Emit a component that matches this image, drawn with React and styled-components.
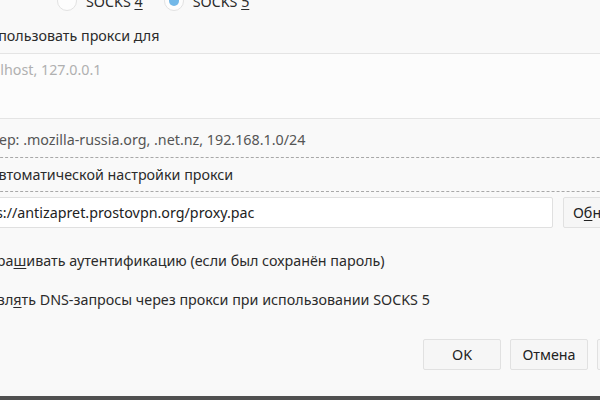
import React from "react";
import styled, { createGlobalStyle } from "styled-components";

const GlobalStyle = createGlobalStyle`
  html, body {
    margin: 0;
    padding: 0;
    background: #f9f9f9;
    overflow: hidden;
  }
  body {
    font-family: "Noto Sans", "Open Sans", sans-serif;
    font-size: 14.3px;
    color: #2b2b2b;
  }
`;

const Page = styled.div`
  width: 600px;
  height: 400px;
  overflow: hidden;
  display: flex;
  flex-direction: column;
  background: #f9f9f9;
`;

const Content = styled.div`
  flex: 1;
  display: flex;
  flex-direction: column;
  margin-left: -40px;
  margin-top: -12px;
`;

const Row = styled.div`
  display: flex;
  align-items: center;
  gap: ${(p) => p.gap || 8}px;
  margin-left: ${(p) => p.shift || 0}px;
  margin-top: ${(p) => p.top || 0}px;
  height: ${(p) => p.h || 20}px;
  white-space: nowrap;
`;

const Radio = styled.span`
  width: 20px;
  height: 20px;
  box-sizing: border-box;
  border-radius: 50%;
  border: 1px solid #e2e2e2;
  background: #fdfdfd;
  display: flex;
  align-items: center;
  justify-content: center;
  flex-shrink: 0;

  &::after {
    content: "";
    width: 10px;
    height: 10px;
    border-radius: 50%;
    background: ${(p) => (p.checked ? "#72b8e8" : "transparent")};
  }
`;

const RadioLabel = styled.span`
  margin-right: 12px;
`;

const Key = styled.u`
  text-decoration-thickness: 1px;
  text-underline-offset: 2px;
`;

const Label = styled.div`
  white-space: nowrap;
`;

const NoProxyArea = styled.textarea`
  display: block;
  margin-top: 7px;
  width: 700px;
  height: 66px;
  box-sizing: border-box;
  border: 0;
  border-top: 1px solid #e4e4e4;
  border-bottom: 1px solid #e4e4e4;
  background: #fcfcfc;
  padding: 6px 8px 6px 13px;
  resize: none;
  font-family: inherit;
  font-size: 14.3px;
  color: #2b2b2b;
  outline: none;

  &::placeholder {
    color: #b0b0b0;
  }
`;

const Hint = styled.div`
  margin-top: 10px;
  height: 20px;
  display: flex;
  align-items: center;
  color: #555;
  white-space: nowrap;
`;

const FocusRow = styled.div`
  margin-top: 8px;
  height: 35px;
  box-sizing: border-box;
  border-top: 1px dashed #a8a8a8;
  border-bottom: 1px dashed #a8a8a8;
  width: 760px;
  display: flex;
  align-items: center;
  white-space: nowrap;
`;

const UrlRow = styled.div`
  display: flex;
  align-items: center;
  gap: 10px;
  margin-top: 5px;
  margin-left: ${(p) => p.shift}px;
`;

const UrlInput = styled.input`
  width: ${(p) => p.w}px;
  height: 31px;
  box-sizing: border-box;
  flex-shrink: 0;
  border: 1px solid #e0e0e0;
  border-radius: 2px;
  background: #fff;
  padding: 0 6px;
  font-family: inherit;
  font-size: 14.3px;
  color: #222;
  outline: none;
`;

const Button = styled.button`
  width: ${(p) => p.w || 78}px;
  height: 31px;
  box-sizing: border-box;
  border: 1px solid #e1e1e1;
  border-radius: 2px;
  background: #f6f6f6;
  font-family: inherit;
  font-size: 14.3px;
  color: #222;
  padding: 0;
  flex-shrink: 0;
`;

const Footer = styled.div`
  display: flex;
  gap: 9px;
  padding-left: 423px;
  padding-bottom: 26px;
`;

const BottomBar = styled.div`
  height: 4px;
  background: #505050;
`;

export default function App() {
  return (
    <>
      <GlobalStyle />
      <Page>
        <Content>
          <Row shift={97} gap={9} h={26}>
            <Radio />
            <RadioLabel>
              SOCKS <Key>4</Key>
            </RadioLabel>
            <Radio checked />
            <RadioLabel>
              SOCKS <Key>5</Key>
            </RadioLabel>
          </Row>
          <Row top={10} h={22}>
            <Label>Не использовать прокси для</Label>
          </Row>
          <NoProxyArea readOnly placeholder="localhost, 127.0.0.1" />
          <Hint>Пример: .mozilla-russia.org, .net.nz, 192.168.1.0/24</Hint>
          <FocusRow>
            <Label>URL автоматической настройки прокси</Label>
          </FocusRow>
          <UrlRow shift={1}>
            <UrlInput
              w={592}
              readOnly
              value="https://antizapret.prostovpn.org/proxy.pac"
            />
            <Button w={88}>
              О<Key>б</Key>новить
            </Button>
          </UrlRow>
          <Row top={21} h={22} shift={12}>
            <Label>
              Запра<Key>ш</Key>ивать аутентификацию (если был сохранён пароль)
            </Label>
          </Row>
          <Row top={17} h={22} shift={-6}>
            <Label>
              Отправл<Key>я</Key>ть DNS-запросы через прокси при использовании
              SOCKS 5
            </Label>
          </Row>
        </Content>
        <Footer>
          <Button>OK</Button>
          <Button>Отмена</Button>
          <Button>Справка</Button>
        </Footer>
        <BottomBar />
      </Page>
    </>
  );
}
